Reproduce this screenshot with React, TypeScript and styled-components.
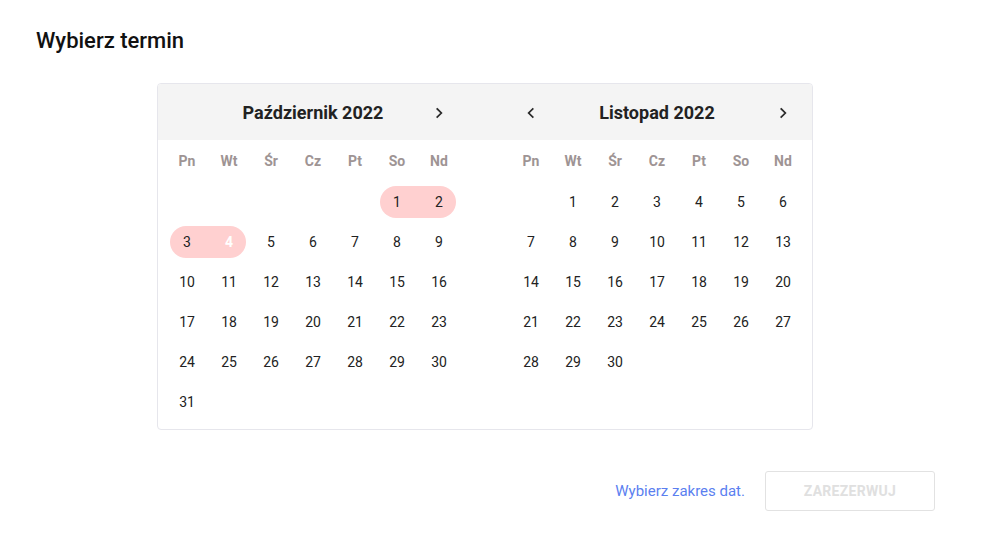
import { FC } from "react";
import styled, { createGlobalStyle } from "styled-components";

const GlobalStyle = createGlobalStyle`
  html, body {
    margin: 0;
    padding: 0;
    background: #ffffff;
    font-family: Roboto, "Noto Sans", sans-serif;
  }
`;

const WEEKDAYS = ["Pn", "Wt", "Śr", "Cz", "Pt", "So", "Nd"];

interface IMonth {
  title: string;
  offset: number;
  days: number;
  prev: boolean;
  next: boolean;
}

const MONTHS: IMonth[] = [
  { title: "Październik 2022", offset: 5, days: 31, prev: false, next: true },
  { title: "Listopad 2022", offset: 1, days: 30, prev: true, next: true },
];

// selected range pieces: key = "monthIndex-day"
const SELECTED: Record<string, "start" | "end" | "light"> = {
  "0-1": "start",
  "0-2": "end",
  "0-3": "start",
  "0-4": "light",
};

const Chevron: FC<{ dir: "left" | "right" }> = ({ dir }) => (
  <svg width="14" height="14" viewBox="0 0 24 24" fill="none">
    <path
      d={dir === "right" ? "M9 5l7 7-7 7" : "M15 5l-7 7 7 7"}
      stroke="#2a2a2a"
      strokeWidth="3"
      strokeLinecap="square"
    />
  </svg>
);

export default function App() {
  return (
    <Page>
      <GlobalStyle />
      <Heading>Wybierz termin</Heading>
      <Card>
        <HeaderBand>
          {MONTHS.map((m) => (
            <MonthHeader key={m.title}>
              <Arrow>{m.prev && <Chevron dir="left" />}</Arrow>
              <MonthTitle>{m.title}</MonthTitle>
              <Arrow>{m.next && <Chevron dir="right" />}</Arrow>
            </MonthHeader>
          ))}
        </HeaderBand>
        <Months>
          {MONTHS.map((m, mi) => (
            <MonthGrid key={m.title}>
              {WEEKDAYS.map((w) => (
                <Weekday key={w}>{w}</Weekday>
              ))}
              {Array.from({ length: m.offset }).map((_, i) => (
                <DayCell key={"e" + i} />
              ))}
              {Array.from({ length: m.days }).map((_, i) => {
                const d = i + 1;
                const sel = SELECTED[`${mi}-${d}`];
                return (
                  <DayCell key={d}>
                    {sel && <Pill $part={sel === "start" ? "start" : "end"} />}
                    <DayNum $light={sel === "light"}>{d}</DayNum>
                  </DayCell>
                );
              })}
            </MonthGrid>
          ))}
        </Months>
      </Card>
      <Footer>
        <Hint>Wybierz zakres dat.</Hint>
        <ReserveButton disabled>ZAREZERWUJ</ReserveButton>
      </Footer>
    </Page>
  );
}

const Page = styled.div`
  width: 992px;
  height: 555px;
  box-sizing: border-box;
  padding: 28px 0 0 36px;
`;

const Heading = styled.h2`
  margin: 0;
  font-size: 22px;
  font-weight: 500;
  color: #111;
  line-height: 26px;
`;

const Card = styled.div`
  width: 656px;
  box-sizing: border-box;
  margin: 29px 0 0 121px;
  border: 1px solid #e6e6ec;
  border-radius: 4px;
  overflow: hidden;
  padding-bottom: 7px;
`;

const HeaderBand = styled.div`
  display: flex;
  gap: 50px;
  height: 56px;
  padding: 0 8px;
  background: #f4f4f4;
`;

const MonthHeader = styled.div`
  width: 294px;
  display: grid;
  grid-template-columns: 42px 1fr 42px;
  align-items: center;
  padding-top: 1px;
`;

const Arrow = styled.div`
  display: flex;
  align-items: center;
  justify-content: center;
  height: 100%;
`;

const MonthTitle = styled.div`
  text-align: center;
  font-size: 18px;
  font-weight: 700;
  color: #222;
`;

const Months = styled.div`
  display: flex;
  gap: 50px;
  padding: 0 8px;
`;

const MonthGrid = styled.div`
  width: 294px;
  display: grid;
  grid-template-columns: repeat(7, 42px);
  grid-auto-rows: 40px;
  grid-template-rows: 42px;
  align-content: start;
`;

const Weekday = styled.div`
  display: flex;
  align-items: center;
  justify-content: center;
  font-size: 14px;
  font-weight: 700;
  color: #9e9494;
`;

const DayCell = styled.div`
  position: relative;
  display: flex;
  align-items: center;
  justify-content: center;
`;

const Pill = styled.span<{ $part: "start" | "end" }>`
  position: absolute;
  top: 4px;
  bottom: 4px;
  left: ${(p) => (p.$part === "start" ? "4px" : "0")};
  right: ${(p) => (p.$part === "end" ? "4px" : "0")};
  background: #ffd0d0;
  border-radius: ${(p) => (p.$part === "start" ? "16px 0 0 16px" : "0 16px 16px 0")};
`;

const DayNum = styled.span<{ $light?: boolean }>`
  position: relative;
  font-size: 14px;
  color: ${(p) => (p.$light ? "#ffffff" : "#222")};
  font-weight: ${(p) => (p.$light ? 700 : 400)};
`;

const Footer = styled.div`
  display: flex;
  align-items: center;
  justify-content: flex-end;
  gap: 20px;
  width: 899px;
  margin-top: 41px;
`;

const Hint = styled.span`
  font-size: 15px;
  color: #5b7ff0;
`;

const ReserveButton = styled.button`
  width: 170px;
  height: 40px;
  border: 1px solid #e2e2e2;
  border-radius: 3px;
  background: #fff;
  font-family: Roboto, sans-serif;
  font-size: 14px;
  font-weight: 700;
  color: #e0e0e0;
  letter-spacing: 0.3px;
`;
